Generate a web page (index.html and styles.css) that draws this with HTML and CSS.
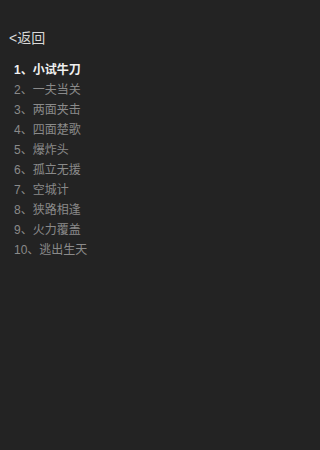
FILE: index.html
```html
<!DOCTYPE html>
<html lang="zh">
<head>
<meta charset="utf-8">
<link rel="stylesheet" href="styles.css">
</head>
<body>
<div class="page">
  <div class="back">&lt;返回</div>
  <ul class="levels">
    <li class="level active">1、小试牛刀</li>
    <li class="level">2、一夫当关</li>
    <li class="level">3、两面夹击</li>
    <li class="level">4、四面楚歌</li>
    <li class="level">5、爆炸头</li>
    <li class="level">6、孤立无援</li>
    <li class="level">7、空城计</li>
    <li class="level">8、狭路相逢</li>
    <li class="level">9、火力覆盖</li>
    <li class="level">10、逃出生天</li>
  </ul>
</div>
</body>
</html>
```
FILE: styles.css
```css
html, body {
  margin: 0;
  padding: 0;
  background: #232323;
  width: 270px;
  height: 450px;
  overflow: hidden;
}
.page {
  font-family: "Liberation Sans", "Noto Sans CJK SC", sans-serif;
  padding-top: 29px;
}
.back {
  padding-left: 9px;
  font-size: 14px;
  line-height: 18px;
  color: #d8d8d8;
}
.levels {
  list-style: none;
  margin: 0;
  padding: 13px 0 0 14px;
}
.level {
  font-size: 12px;
  line-height: 20px;
  color: #8a8a8a;
}
.level.active {
  color: #f0f0f0;
  font-weight: bold;
}
```
